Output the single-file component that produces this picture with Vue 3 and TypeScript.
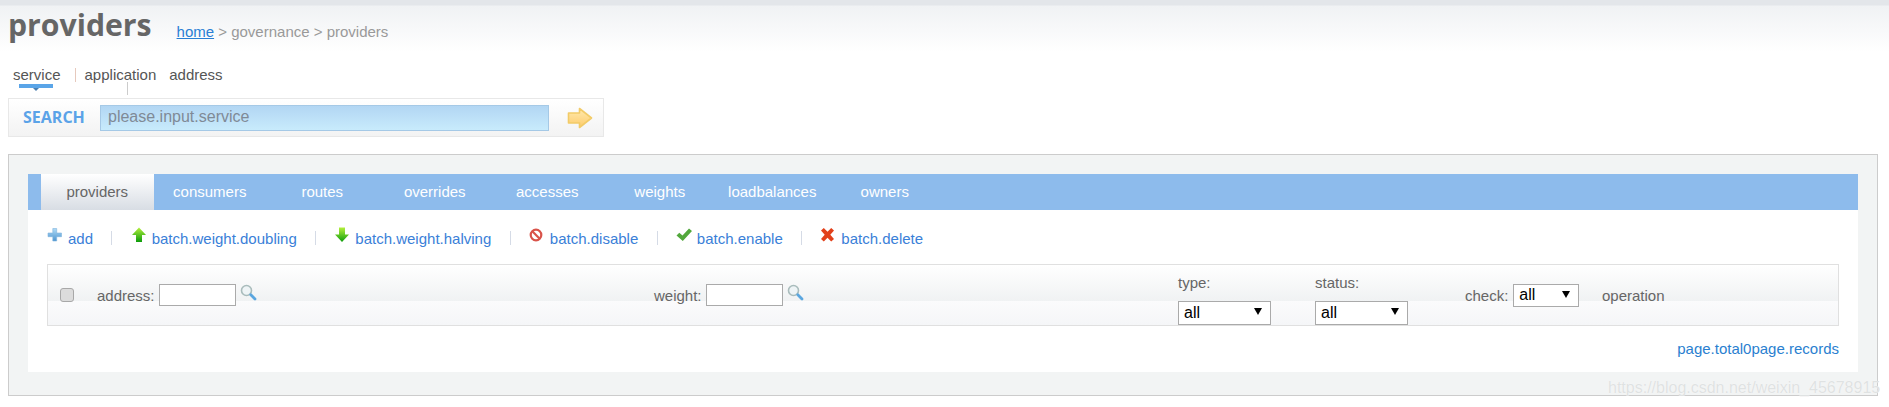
<script setup lang="ts">
interface Action { label: string; icon: string }
const tabs: string[] = ['providers', 'consumers', 'routes', 'overrides', 'accesses', 'weights', 'loadbalances', 'owners']
const actions: Action[] = [
  { label: 'add', icon: 'add' },
  { label: 'batch.weight.doubling', icon: 'up' },
  { label: 'batch.weight.halving', icon: 'down' },
  { label: 'batch.disable', icon: 'block' },
  { label: 'batch.enable', icon: 'check' },
  { label: 'batch.delete', icon: 'del' },
]
</script>

<template>
  <div class="page">
    <header class="head">
      <h1 class="title">providers</h1>
      <div class="crumb"><a class="home">home</a> &gt; governance &gt; providers</div>
    </header>

    <nav class="scope">
      <span class="scope-item on">service</span>
      <i class="scope-sep"></i>
      <span class="scope-item app">application</span>
      <span class="scope-item">address</span>
    </nav>

    <div class="search">
      <span class="search-label">SEARCH</span>
      <input class="search-input" placeholder="please.input.service" />
      <svg class="go" width="26" height="22" viewBox="0 0 26 22">
        <defs>
          <linearGradient id="goFill" x1="0" y1="0" x2="0" y2="1">
            <stop offset="0" stop-color="#ffeab0" />
            <stop offset="1" stop-color="#fdcb6a" />
          </linearGradient>
        </defs>
        <path d="M1.500 6H12.500V1.500L24.500 11 12.500 20.500V16H1.500Z" fill="url(#goFill)" stroke="#f2cb68" stroke-width="1.600" stroke-linejoin="round" />
      </svg>
    </div>

    <main class="panel">
      <section class="inner">
        <ul class="tabs">
          <li v-for="(t, i) in tabs" :key="t" class="tab" :class="{ active: i === 0 }">{{ t }}</li>
        </ul>

        <div class="actions">
          <template v-for="(a, i) in actions" :key="a.label">
            <i v-if="i > 0" class="act-sep"></i>
            <a class="act">
              <svg class="act-icon" width="16" height="16" viewBox="0 0 16 16">
                <defs>
                  <linearGradient id="gPlus" x1="0" y1="0" x2="0" y2="1"><stop offset="0" stop-color="#b0dbf6" /><stop offset="1" stop-color="#4d94cf" /></linearGradient>
                  <linearGradient id="gUp" x1="0" y1="0" x2="0" y2="1"><stop offset="0" stop-color="#b4f03c" /><stop offset="1" stop-color="#0b9c0b" /></linearGradient>
                </defs>
                <path v-if="a.icon === 'add'" d="M5.800 1.500h3.900v4.500h4.800v3.700H9.700V14H5.800V9.700H1V6h4.800Z" fill="url(#gPlus)" stroke="#7fb4de" stroke-width=".6" stroke-linejoin="round" />
                <path v-else-if="a.icon === 'up'" d="M8 .5 15 8H11V15H5V8H1Z" fill="url(#gUp)" />
                <path v-else-if="a.icon === 'down'" d="M5 .5H11V7.500H15L8 15 1 7.500H5Z" fill="url(#gUp)" />
                <g v-else-if="a.icon === 'block'" fill="none" stroke="#d9534a" stroke-width="2.200">
                  <circle cx="7" cy="8" r="5.300" />
                  <path d="M3.300 4.300 10.700 11.700" />
                </g>
                <path v-else-if="a.icon === 'check'" d="M.5 8.500 3.300 5.800 6.500 8.500 13 1.500 16 4 6.800 14Z" fill="#52a83c" />
                <path v-else d="M1 3.500 3.800 1 7.500 4.800 11.200 1 14 3.500 10.300 7.800 14 12 11.200 14.500 7.500 10.700 3.800 14.500 1 12 4.700 7.800Z" fill="#e2401a" />
              </svg>
              <span>{{ a.label }}</span>
            </a>
          </template>
        </div>

        <div class="filter">
          <div class="cell"><span class="cb"></span></div>
          <div class="cell">
            <label>address:</label><input class="txt" />
            <svg class="mag" width="17" height="17" viewBox="0 0 17 17">
              <circle cx="6.500" cy="6.500" r="5" fill="#eef4f6" stroke="#a9bcbc" stroke-width="1.600" />
              <path d="M10.800 10.800 15 15" stroke="#5aa6df" stroke-width="2.800" stroke-linecap="round" />
            </svg>
          </div>
          <div class="cell">
            <label>weight:</label><input class="txt" />
            <svg class="mag" width="17" height="17" viewBox="0 0 17 17">
              <circle cx="6.500" cy="6.500" r="5" fill="#eef4f6" stroke="#a9bcbc" stroke-width="1.600" />
              <path d="M10.800 10.800 15 15" stroke="#5aa6df" stroke-width="2.800" stroke-linecap="round" />
            </svg>
          </div>
          <div class="cell stack">
            <label>type:</label>
            <span class="sel wide"><select><option>all</option></select></span>
          </div>
          <div class="cell stack">
            <label>status:</label>
            <span class="sel wide"><select><option>all</option></select></span>
          </div>
          <div class="cell">
            <label>check:</label>
            <span class="sel"><select><option>all</option></select></span>
          </div>
          <div class="cell"><label>operation</label></div>
        </div>

        <div class="pager"><a>page.total0page.records</a></div>
      </section>
    </main>

    <div class="mark">https://blog.csdn.net/weixin_45678915</div>
  </div>
</template>

<style scoped>
.page {
  position: relative;
  box-sizing: border-box;
  width: 1889px;
  height: 407px;
  overflow: hidden;
  font-family: "Liberation Sans", Arial, sans-serif;
  font-size: 15px;
  color: #666;
  background: linear-gradient(#e3e6ea 0, #e3e6ea 5px, #f0f2f4 6px, #fff 52px);
}
.head {
  display: flex;
  align-items: flex-start;
  padding: 5px 0 0 8px;
  height: 49px;
  box-sizing: border-box;
}
.title {
  margin: 0;
  font-family: "Open Sans", sans-serif;
  font-weight: 700;
  font-size: 30.200px;
  line-height: 40px;
  color: #666;
}
.crumb {
  margin: 18px 0 0 25px;
  color: #999;
}
.home {
  color: #2a7fd4;
  text-decoration: underline;
}
.scope {
  display: flex;
  align-items: center;
  box-sizing: border-box;
  height: 49px;
  padding: 2px 0 0 13px;
  color: #555;
}
.scope-item {
  position: relative;
  margin-right: 13px;
}
.scope-item.on {
  margin-right: 14px;
}
.scope-item.on::after {
  content: "";
  position: absolute;
  left: 6px;
  top: 18px;
  width: 34px;
  height: 4px;
  background: #5aa5e8;
}
.scope-item.on::before {
  content: "";
  position: absolute;
  left: 20px;
  top: 22px;
  border: 3px solid transparent;
  border-top-color: #4a7fb0;
  border-bottom: 0;
}
.scope-sep {
  width: 1px;
  height: 14px;
  margin-right: 9px;
  background: #e6c9bd;
}
.scope-item.app::after {
  content: "";
  position: absolute;
  left: 42px;
  top: 16px;
  width: 1px;
  height: 13px;
  background: #ccc;
}
.search {
  display: flex;
  align-items: center;
  box-sizing: border-box;
  width: 596px;
  height: 39px;
  margin-left: 8px;
  border: 1px solid #e8e8e8;
  background: linear-gradient(#fff, #f3f3f3);
}
.search-label {
  width: 91px;
  padding: 0 0 2px 14px;
  box-sizing: border-box;
  font-family: "Open Sans", sans-serif;
  font-weight: 700;
  font-size: 16px;
  color: #5ba3e8;
}
.search-input {
  box-sizing: border-box;
  width: 449px;
  height: 26px;
  padding: 0 7px 2px;
  border: 1px solid #a5c9e6;
  outline: 0;
  font: 16px "Liberation Sans", Arial, sans-serif;
  background: linear-gradient(#b2d6f3, #c8ebfc);
}
.search-input::placeholder {
  color: #7f8a96;
  opacity: 1;
}
.go {
  margin-left: 18px;
}
.panel {
  box-sizing: border-box;
  width: 1870px;
  height: 242px;
  margin: 17px 0 0 8px;
  padding: 19px 19px 0 19px;
  border: 1px solid #ccc;
  background: #f2f4f4;
}
.inner {
  height: 198px;
  background: #fff;
}
.tabs {
  display: grid;
  grid-template-columns: repeat(8, 112.500px);
  height: 36px;
  margin: 0;
  padding: 0 0 0 13px;
  list-style: none;
  background: #8dbbec;
}
.tab {
  line-height: 36px;
  text-align: center;
  color: #fff;
}
.tab.active {
  color: #666;
  background: linear-gradient(#fff, #d8dde4);
}
.actions {
  display: flex;
  align-items: center;
  height: 22px;
  margin-top: 17px;
  padding-left: 19px;
}
.act {
  display: flex;
  align-items: center;
  color: #3a80d8;
}
.act-icon {
  margin: -6px 5px 0 0;
}
.act-sep {
  width: 1px;
  height: 14px;
  margin: 0 18.300px;
  background: #d5dbe6;
}
.filter {
  display: grid;
  grid-template-columns: 49px 557px 524px 137px 150px 137px 1fr;
  align-items: center;
  box-sizing: border-box;
  height: 62px;
  margin: 15px 19px 0 19px;
  border: 1px solid #e0e0e0;
  background: linear-gradient(#fff, #f0f2f3 36px, #fbfbfc 36px, #f5f6f8 100%);
}
.cell {
  display: flex;
  align-items: center;
}
.stack {
  flex-direction: column;
  align-items: flex-start;
  height: 100%;
  padding-top: 9px;
  box-sizing: border-box;
}
.stack label {
  height: 27px;
}
.cb {
  box-sizing: border-box;
  width: 14px;
  height: 14px;
  margin: 0 0 0 12px;
  border: 1px solid #a8a8a8;
  border-radius: 3px;
  background: #dcdcdc;
}
.txt {
  box-sizing: border-box;
  width: 77px;
  height: 22px;
  margin-left: 4px;
  border: 1px solid #aaa;
  background: #fff;
}
.mag {
  margin: -6px 0 0 4px;
}
.sel {
  position: relative;
  display: block;
  margin-left: 5px;
}
.stack .sel {
  margin-left: 0;
}
.sel select {
  display: block;
  box-sizing: border-box;
  width: 66px;
  height: 23px;
  padding: 0 0 2px 5px;
  border: 1px solid #aaa;
  border-radius: 0;
  appearance: none;
  outline: 0;
  font: 16px "Liberation Sans", Arial, sans-serif;
  color: #000;
  background: #fff;
}
.sel.wide select {
  width: 93px;
  height: 24px;
}
.sel::after {
  content: "";
  position: absolute;
  right: 9px;
  top: 7px;
  border: 4px solid transparent;
  border-top: 7px solid #000;
  border-bottom: 0;
}
.pager {
  margin: 14px 19px 0 0;
  text-align: right;
  color: #2a7fd0;
}
.mark {
  position: absolute;
  left: 1608px;
  top: 379px;
  white-space: nowrap;
  font-size: 16px;
  color: #dfe2e2;
  text-shadow: 0 0 1px #fff;
}
</style>
